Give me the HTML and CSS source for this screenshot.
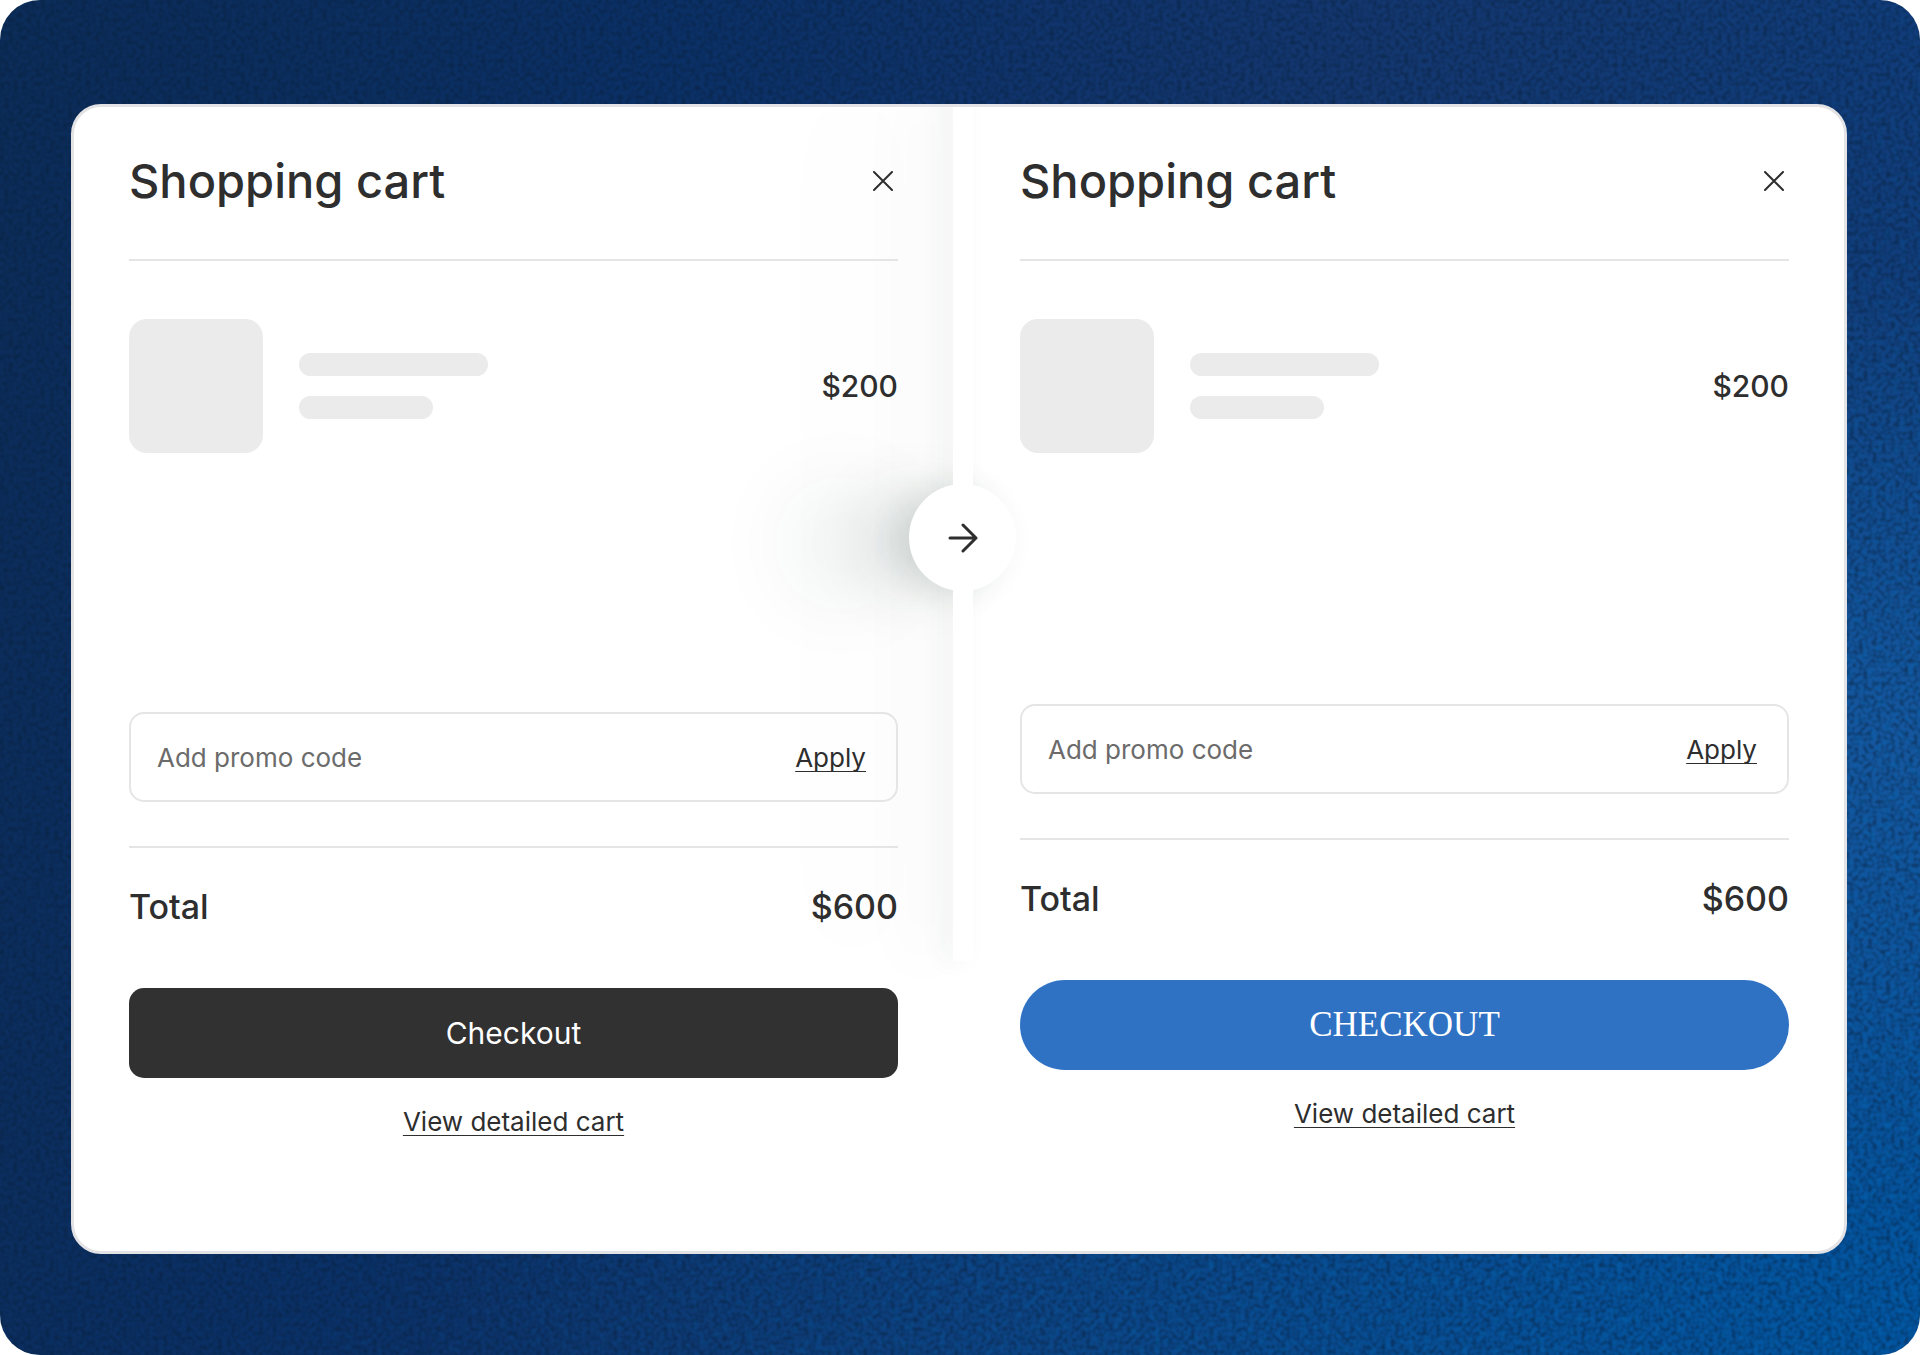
FILE: index.html
```html
<!DOCTYPE html>
<html lang="en">
<head>
  <meta charset="UTF-8">
  <meta name="viewport" content="width=device-width, initial-scale=1">
  <title>Shopping cart</title>
  <link rel="stylesheet" href="styles.css">
</head>
<body>

  <main class="stage">
    <!-- leather-like grain over the blue gradient -->
    <svg class="grain" aria-hidden="true">
      <filter id="fine" color-interpolation-filters="sRGB">
        <feTurbulence type="fractalNoise" baseFrequency="0.22" numOctaves="1" seed="4"/>
        <feColorMatrix values="0 0 0 0 0.03  0 0 0 0 0.12  0 0 0 0 0.22  2.4 0 0 0 -0.95"/>
      </filter>
      <rect width="100%" height="100%" filter="url(#fine)"/>
    </svg>
    <svg class="grain grain-coarse" aria-hidden="true">
      <filter id="coarse" color-interpolation-filters="sRGB">
        <feTurbulence type="fractalNoise" baseFrequency="0.13" numOctaves="1" seed="9"/>
        <feColorMatrix values="0 0 0 0 0.01  0 0 0 0 0.4  0 0 0 0 0.7  3 0 0 0 -1.4"/>
      </filter>
      <rect width="100%" height="100%" filter="url(#coarse)"/>
    </svg>

    <div class="card">
      <div class="seam">
        <div class="seam-strip"></div>
        <div class="seam-knob">
          <svg width="30" height="30" viewBox="0 0 30 30" fill="none" stroke="currentColor" stroke-width="3" stroke-linecap="round" stroke-linejoin="round" aria-hidden="true">
            <path d="M2 15H28M15 2L28 15L15 28"/>
          </svg>
        </div>
      </div>

      <section class="cart">
        <header class="cart-header">
          <h2>Shopping cart</h2>
          <button class="close" type="button" aria-label="Close">
            <svg width="20" height="20" viewBox="0 0 20 20" fill="none" stroke="currentColor" stroke-width="2" stroke-linecap="round" aria-hidden="true">
              <path d="M1 1L19 19M19 1L1 19"/>
            </svg>
          </button>
        </header>
        <div class="item">
          <div class="thumb"></div>
          <div class="lines">
            <div class="line"></div>
            <div class="line line-short"></div>
          </div>
          <span class="price">$200</span>
        </div>
        <form class="promo">
          <input type="text" name="promo" placeholder="Add promo code" aria-label="Add promo code">
          <button class="apply" type="button">Apply</button>
        </form>
        <div class="total">
          <span>Total</span>
          <span>$600</span>
        </div>
        <button class="checkout" type="button">Checkout</button>
        <a class="details" href="#">View detailed cart</a>
      </section>

      <section class="cart cart-branded">
        <header class="cart-header">
          <h2>Shopping cart</h2>
          <button class="close" type="button" aria-label="Close">
            <svg width="20" height="20" viewBox="0 0 20 20" fill="none" stroke="currentColor" stroke-width="2" stroke-linecap="round" aria-hidden="true">
              <path d="M1 1L19 19M19 1L1 19"/>
            </svg>
          </button>
        </header>
        <div class="item">
          <div class="thumb"></div>
          <div class="lines">
            <div class="line"></div>
            <div class="line line-short"></div>
          </div>
          <span class="price">$200</span>
        </div>
        <form class="promo">
          <input type="text" name="promo" placeholder="Add promo code" aria-label="Add promo code">
          <button class="apply" type="button">Apply</button>
        </form>
        <div class="total">
          <span>Total</span>
          <span>$600</span>
        </div>
        <button class="checkout" type="button">CHECKOUT</button>
        <a class="details" href="#">View detailed cart</a>
      </section>
    </div>
  </main>

</body>
</html>
```

FILE: styles.css
```css
* {
  box-sizing: border-box;
}
body {
  margin: 0;
  background-color: white;
  color: #2e2e2e;
  font-family: Inter, sans-serif;
  font-size: 26px;
}
button,
input {
  font: inherit;
  color: inherit;
  border: none;
  background: none;
  padding: 0;
}
button {
  cursor: pointer;
}

.stage {
  position: relative;
  display: flex;
  min-height: 100vh;
  padding: 104px 73px 101px 71px;
  border-radius: 40px;
  overflow: hidden;
  background:
    radial-gradient(ellipse at 100% 55%, rgba(24, 92, 165, 0.75), transparent 45%),
    radial-gradient(ellipse at 100% 100%, rgba(0, 88, 165, 0.85), transparent 55%),
    linear-gradient(105deg, #0c2c58 0%, #0b3066 30%, #13366e 60%, #104080 100%);
}
.grain {
  position: absolute;
  inset: 0;
  width: 100%;
  height: 100%;
  opacity: 0.5;
}
.grain-coarse {
  mask-image: linear-gradient(140deg, transparent 45%, black 95%);
}

.card {
  position: relative;
  flex: 1;
  display: grid;
  grid-template-columns: 1fr 1fr;
  gap: 122px;
  padding: 0 55px;
  background-color: white;
  border: 3px solid #e3e3e6;
  border-radius: 30px;
}

/* divider between the two carts */
.seam {
  position: absolute;
  inset: 0;
  overflow: hidden;
  border-radius: 27px;
}
.seam-strip {
  position: absolute;
  top: -20px;
  bottom: 290px;
  left: calc(50% - 6px);
  width: 20px;
  background-color: white;
  box-shadow:
    -10px 0 24px rgba(30, 60, 50, 0.06),
    -40px 0 60px rgba(30, 60, 50, 0.05),
    -110px 0 100px rgba(30, 60, 50, 0.04);
}
.seam-knob {
  position: absolute;
  top: 377px;
  left: calc(50% - 50px);
  width: 107px;
  height: 107px;
  display: flex;
  align-items: center;
  justify-content: center;
  border-radius: 50%;
  background-color: white;
  box-shadow:
    -12px 2px 30px rgba(30, 60, 50, 0.11),
    -50px 4px 60px rgba(30, 60, 50, 0.1),
    -120px 6px 90px rgba(30, 60, 50, 0.07);
}
/* keeps the knob's shadow off the strip */
.seam-knob::before {
  content: "";
  position: absolute;
  top: -100px;
  bottom: -100px;
  left: 44px;
  width: 20px;
  background-color: white;
}
.seam-knob svg {
  position: relative;
}

.cart {
  position: relative;
  display: flex;
  flex-direction: column;
  min-width: 0;
}
.cart-header {
  display: flex;
  align-items: center;
  justify-content: space-between;
  padding: 44px 0 48px;
  border-bottom: 2px solid #e5e5e5;
}
h2 {
  margin: 0;
  font-size: 47px;
  font-weight: 500;
  line-height: 60px;
}
.close {
  display: flex;
  padding: 4px 5px;
}

.item {
  display: flex;
  align-items: center;
  gap: 36px;
  margin: 58px 0 259px;
}
.thumb {
  width: 134px;
  height: 134px;
  border-radius: 18px;
  background-color: #ebebeb;
}
.lines {
  flex: 1;
  display: flex;
  flex-direction: column;
  gap: 20px;
}
.line {
  width: 189px;
  height: 23px;
  border-radius: 12px;
  background-color: #ebebeb;
}
.line-short {
  width: 134px;
}
.price {
  font-size: 30px;
  font-weight: 500;
}

.promo {
  display: flex;
  align-items: center;
  height: 90px;
  padding: 0 30px 0 26px;
  border: 2px solid #e5e5e5;
  border-radius: 15px;
}
.promo input {
  flex: 1;
  min-width: 0;
}
.promo input::placeholder {
  color: #6b6b6b;
  opacity: 1;
}
.apply,
.details {
  color: #2e2e2e;
  text-decoration: underline;
  text-decoration-thickness: 1px;
  text-decoration-skip-ink: none;
  text-underline-offset: 4px;
}

.total {
  display: flex;
  justify-content: space-between;
  margin-top: 44px;
  padding: 39px 0 61px;
  border-top: 2px solid #e5e5e5;
  font-size: 34px;
  font-weight: 500;
  line-height: 40px;
}
.checkout {
  height: 90px;
  border-radius: 15px;
  background-color: #313131;
  color: white;
  font-size: 30px;
}
.details {
  align-self: center;
  margin-top: 24px;
  line-height: 40px;
}

.cart-branded .item {
  margin-bottom: 251px;
}
.cart-branded .checkout {
  border-radius: 45px;
  background-color: #2f72c4;
  font-family: "Liberation Serif", serif;
  font-size: 35px;
}
```
